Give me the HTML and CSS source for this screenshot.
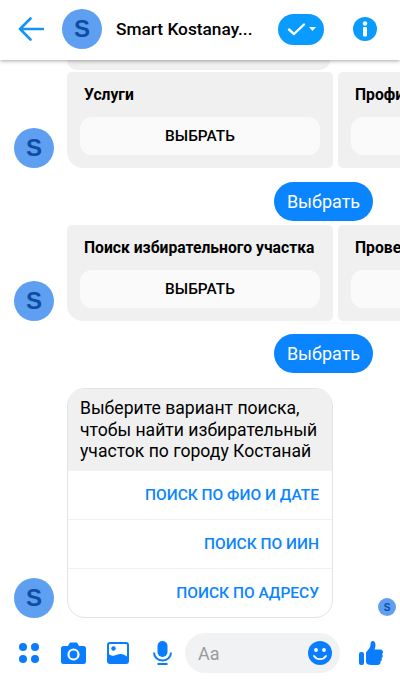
FILE: index.html
```html
<!DOCTYPE html>
<html lang="en">
<head>
    <meta charset="UTF-8">
    <meta name="viewport" content="width=device-width, initial-scale=1.0">
    <title>Smart Kostanay</title>
    <link rel="stylesheet" href="styles.css">
</head>
<body>
    <div class="page">
        <header class="topbar">
            <svg class="back-icon" width="26" height="24" viewBox="0 0 26 24"><path d="M25 12H2M12.500 1.500L2 12l10.500 10.500" fill="none" stroke="#1494f4" stroke-width="2.600" stroke-linecap="round" stroke-linejoin="round"/></svg>
            <div class="avatar avatar-top">S</div>
            <div class="topbar-title">Smart Kostanay...</div>
            <div class="status-pill">
                <svg width="19" height="14" viewBox="0 0 19 14"><path d="M2 7.500L7 12 17 2.500" fill="none" stroke="#fff" stroke-width="2.400" stroke-linecap="round" stroke-linejoin="round"/></svg>
                <svg width="7" height="4" viewBox="0 0 7 4"><path d="M0 0h7L3.500 4z" fill="#fff"/></svg>
            </div>
            <svg class="info-icon" width="24" height="24" viewBox="0 0 24 24"><circle cx="12" cy="12" r="12" fill="#0a9bff"/><circle cx="12" cy="6.500" r="2.200" fill="#fff"/><rect x="10" y="10" width="4" height="9.500" rx="1" fill="#fff"/></svg>
        </header>

        <main class="chat">
            <div class="card-stub"></div>

            <div class="row row-first">
                <div class="avatar">S</div>
                <div class="carousel">
                    <div class="card card-lead">
                        <div class="card-title">Услуги</div>
                        <div class="card-button">ВЫБРАТЬ</div>
                    </div>
                    <div class="card">
                        <div class="card-title">Профиль</div>
                        <div class="card-button"></div>
                    </div>
                </div>
            </div>

            <div class="bubble-row"><div class="bubble">Выбрать</div></div>

            <div class="row row-second">
                <div class="avatar">S</div>
                <div class="carousel">
                    <div class="card card-lead">
                        <div class="card-title">Поиск избирательного участка</div>
                        <div class="card-button">ВЫБРАТЬ</div>
                    </div>
                    <div class="card">
                        <div class="card-title">Проверка</div>
                        <div class="card-button"></div>
                    </div>
                </div>
            </div>

            <div class="bubble-row bubble-row-second"><div class="bubble">Выбрать</div></div>

            <div class="row row-last">
                <div class="avatar">S</div>
                <div class="options-card">
                    <div class="options-text">Выберите вариант поиска, чтобы найти избирательный участок по городу Костанай</div>
                    <div class="option">ПОИСК ПО ФИО И ДАТЕ</div>
                    <div class="option">ПОИСК ПО ИИН</div>
                    <div class="option">ПОИСК ПО АДРЕСУ</div>
                </div>
                <div class="avatar avatar-seen">S</div>
            </div>
        </main>

        <footer class="composer">
            <svg class="tool tool-apps" width="20" height="20" viewBox="0 0 20 20"><g fill="#0a7cff"><circle cx="4" cy="4" r="4"/><circle cx="16" cy="4" r="4"/><circle cx="4" cy="16" r="4"/><circle cx="16" cy="16" r="4"/></g></svg>
            <svg class="tool tool-camera" width="25" height="22" viewBox="0 0 25 22"><path d="M2.500 4H7l1.300-2.600C8.600.8 9 .5 9.700.5h5.600c.7 0 1.100.3 1.400.9L18 4h4.500A2.500 2.500 0 0 1 25 6.500v13a2.500 2.500 0 0 1-2.500 2.500h-20A2.500 2.500 0 0 1 0 19.500v-13A2.500 2.500 0 0 1 2.500 4z" fill="#0a7cff"/><circle cx="12.500" cy="12.500" r="5" fill="none" stroke="#fff" stroke-width="2.200"/></svg>
            <svg class="tool tool-photo" width="22" height="22" viewBox="0 0 22 22"><rect width="22" height="22" rx="3" fill="#0a7cff"/><path d="M2 3.200c0-.7.500-1.200 1.200-1.200h15.600c.7 0 1.200.5 1.200 1.200v11.300c-2.500-2-5-3-7.500-2.400-3 .7-5 2-7 1.600-1.300-.2-2.500-.7-3.500-1.500z" fill="#fff"/><circle cx="6.500" cy="6.500" r="2.200" fill="#0a7cff"/></svg>
            <svg class="tool tool-mic" width="19" height="24" viewBox="0 0 19 24"><rect x="4.500" width="10" height="16" rx="5" fill="#0a7cff"/><path d="M1 11.500c0 4.800 3.700 8 8.500 8s8.500-3.200 8.500-8" fill="none" stroke="#0a7cff" stroke-width="2"/><rect x="4.500" y="22" width="10" height="2" fill="#0a7cff"/></svg>
            <div class="input">
                <span class="input-text">Aa</span>
                <svg width="24" height="24" viewBox="0 0 24 24"><circle cx="12" cy="12" r="12" fill="#0a7cff"/><circle cx="8" cy="9" r="1.900" fill="#fff"/><circle cx="16" cy="9" r="1.900" fill="#fff"/><path d="M6 15c1.500 2.200 3.600 3.200 6 3.200s4.500-1 6-3.200" fill="none" stroke="#fff" stroke-width="1.800" stroke-linecap="round"/></svg>
            </div>
            <svg class="tool tool-like" width="24" height="25" viewBox="0 0 24 25"><g fill="#0a7cff"><rect y="11" width="5" height="13" rx="2"/><path d="M7 11.500l3.500-4.500c.8-1 1-2.200 1-4 0-1.800 1-3 2.300-3 1.700 0 2.700 1.700 2.700 4 0 1.700-.4 3-1 4.500h5.500c1.700 0 3 1 3 2.500 0 1-.5 1.700-1 2.200.5.500.8 1.100.8 1.800 0 1-.6 1.700-1.300 2.200.2.400.3.800.3 1.200 0 1-.6 1.800-1.500 2.200.1.300.2.600.2 1 0 1.500-1.200 2.400-2.800 2.400h-6.500C9.500 24 7 23 7 21z"/></g></svg>
        </footer>
    </div>
</body>
</html>
```

FILE: styles.css
```css
body {
    margin: 0;
    font-family: 'Roboto', sans-serif;
    background-color: #fff;
    color: #000;
}

.page {
    display: flex;
    flex-direction: column;
    width: 400px;
    height: 682px;
    overflow: hidden;
}

.topbar {
    display: flex;
    align-items: center;
    flex: none;
    height: 60px;
    padding-left: 18px;
    padding-bottom: 2px;
    box-sizing: border-box;
    background-color: #fff;
    box-shadow: 0 1px 4px rgba(0, 0, 0, 0.35);
    position: relative;
    z-index: 1;
}

.back-icon {
    margin-right: 18px;
}

.avatar {
    display: flex;
    align-items: center;
    justify-content: center;
    flex: none;
    width: 40px;
    height: 40px;
    border-radius: 50%;
    background-color: #5f9ff2;
    color: #0f4da3;
    font-family: 'Liberation Sans', sans-serif;
    font-size: 24px;
    font-weight: 700;
}

.topbar-title {
    width: 162px;
    margin-left: 14px;
    font-size: 17.300px;
    font-weight: 500;
    white-space: nowrap;
}

.status-pill {
    display: flex;
    align-items: center;
    justify-content: center;
    gap: 3px;
    width: 46px;
    height: 31px;
    border-radius: 16px;
    background-color: #0a9bff;
}

.info-icon {
    margin-left: 29px;
}

.chat {
    flex: 1;
    min-height: 0;
}

.card-stub {
    width: 263px;
    height: 10px;
    margin-left: 67px;
    border-radius: 0 0 16px 16px;
    background-color: #f0f0f0;
}

.row {
    display: flex;
    align-items: flex-end;
    gap: 13px;
    padding-left: 14px;
}

.row-first {
    margin-top: 2px;
}

.row-second {
    margin-top: 4px;
}

.row-last {
    margin-top: 15px;
}

.carousel {
    display: flex;
    gap: 5px;
    flex: 1;
    min-width: 0;
    overflow: hidden;
}

.card {
    flex: none;
    width: 266px;
    padding: 13px;
    box-sizing: border-box;
    border-radius: 5px;
    background-color: #f0f0f0;
}

.card-lead {
    border-bottom-left-radius: 16px;
}

.card-title {
    margin: 0 0 12px 4px;
    font-size: 15.700px;
    font-weight: 700;
    line-height: 20px;
    white-space: nowrap;
}

.card-button {
    height: 38px;
    border-radius: 12px;
    background-color: #fafafa;
    font-size: 15.400px;
    font-weight: 500;
    line-height: 38px;
    text-align: center;
}

.bubble-row {
    display: flex;
    justify-content: flex-end;
    margin-top: 14px;
    padding-right: 27px;
}

.bubble-row-second {
    margin-top: 13px;
}

.bubble {
    width: 99px;
    height: 39px;
    border-radius: 20px;
    background-color: #0a84ff;
    color: #fff;
    font-size: 18px;
    line-height: 39px;
    text-align: center;
}

.options-card {
    width: 266px;
    box-sizing: border-box;
    border: 1px solid #e4e4e4;
    border-radius: 18px;
    overflow: hidden;
}

.options-text {
    height: 81px;
    padding: 9px 12px 0;
    box-sizing: border-box;
    background-color: #f0f0f0;
    font-size: 17.600px;
    line-height: 21.500px;
}

.option {
    height: 49px;
    padding-right: 13px;
    box-sizing: border-box;
    border-top: 1px solid #f2f2f2;
    color: #0a84ff;
    font-size: 15.500px;
    font-weight: 500;
    line-height: 49px;
    text-align: right;
}

.option:first-of-type {
    border-top: none;
}

.avatar-seen {
    width: 18px;
    height: 18px;
    margin: 0 0 2px 32px;
    font-size: 10px;
}

.composer {
    display: flex;
    align-items: center;
    flex: none;
    height: 65px;
    padding-left: 19px;
    padding-top: 7px;
    box-sizing: border-box;
}

.tool-camera {
    margin-left: 22px;
}

.tool-photo {
    margin-left: 21px;
}

.tool-mic {
    margin-left: 24px;
}

.input {
    display: flex;
    align-items: center;
    justify-content: space-between;
    width: 155px;
    height: 40px;
    margin-left: 13px;
    padding: 0 8px 0 13px;
    box-sizing: border-box;
    border-radius: 20px;
    background-color: #f1f2f4;
}

.input-text {
    color: #9a9a9a;
    font-size: 18px;
}

.tool-like {
    margin-left: 19px;
}
```
